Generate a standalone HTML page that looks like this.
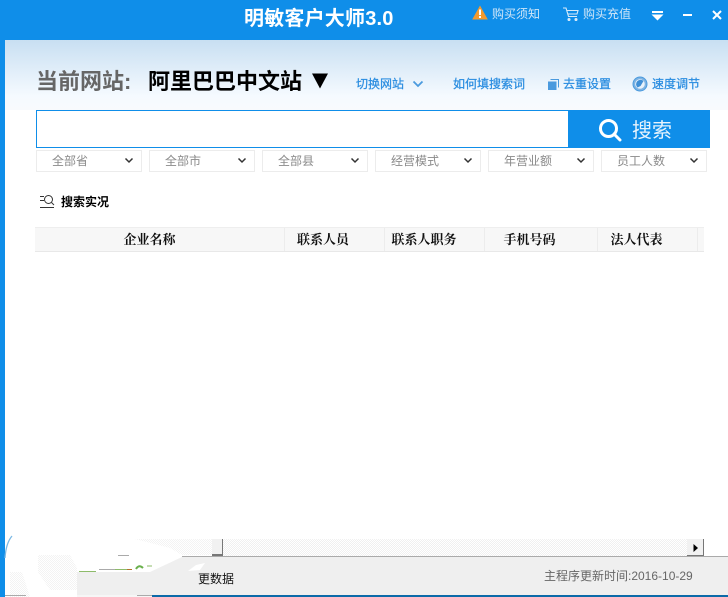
<!DOCTYPE html>
<html lang="zh"><head><meta charset="utf-8"><style>
*{box-sizing:border-box}
html,body{margin:0;padding:0;width:728px;height:597px;overflow:hidden;background:#fff}
body{position:relative;font-family:"Liberation Sans","Noto Sans CJK SC",sans-serif}
.a{position:absolute;white-space:nowrap}
.sel{position:absolute;top:150px;width:106px;height:22px;border:1px solid #ececec;background:#fff;color:#8a8a8a;font-size:12px;line-height:20px;padding-left:15px}
.sel svg{position:absolute;left:86px;top:6px}
.th{position:absolute;top:228px;height:23px;text-align:center;font:bold 13px/23px "Liberation Serif","Noto Serif CJK SC",serif;color:#111;border-right:1px solid #ececec}
.lnk{color:#2a8de0;font-size:12px;line-height:16px;-webkit-text-stroke:.25px #2a8de0}
</style></head><body>
<div class="a" style="left:0;top:40px;width:728px;height:70px;background:linear-gradient(#c8dff2,#f5faff 80%,#f8fafd)"></div>
<div class="a" style="left:0;top:0;width:728px;height:40px;background:#0f8ee9"></div>
<div class="a" style="left:0;top:40px;width:5px;height:557px;background:#0f8ee9"></div>
<div class="a" style="left:244px;top:5px;color:#fff;font-size:20px;font-weight:bold;line-height:28px;letter-spacing:.2px">明敏客户大师3.0</div>

<svg class="a" style="left:472px;top:5px" width="16" height="15" viewBox="0 0 16 15"><path d="M8 0.5L15.8 14.5H0.2Z" fill="#f29a2e"/><rect x="7" y="4.5" width="2" height="5.5" fill="#fff"/><rect x="7" y="11" width="2" height="2" fill="#fff"/></svg>
<div class="a" style="left:492px;top:6px;color:#cfe6f8;font-size:12px;line-height:16px">购买须知</div>
<svg class="a" style="left:563px;top:7px" width="16" height="15" viewBox="0 0 16 15" fill="none" stroke="#d8ebfa" stroke-width="1.1"><path d="M0 1H3L5.5 9.5H14"/><path d="M3.5 3.5H15L14 7H5"/><circle cx="6" cy="12.5" r="1" fill="#d8ebfa"/><circle cx="13" cy="12.5" r="1" fill="#d8ebfa"/></svg>
<div class="a" style="left:583px;top:6px;color:#cfe6f8;font-size:12px;line-height:16px">购买充值</div>
<svg class="a" style="left:651px;top:10px" width="13" height="11" viewBox="0 0 13 11"><rect x="1" y="1" width="11" height="2" fill="#fff"/><path d="M0.5 4.5H12.500L6.500 10.500Z" fill="#fff"/></svg>
<div class="a" style="left:683px;top:14px;width:9px;height:2px;background:#fff"></div>
<svg class="a" style="left:712px;top:10px" width="10" height="10" viewBox="0 0 10 10"><path d="M1 1L9 9M9 1L1 9" stroke="#fff" stroke-width="2"/></svg>

<div class="a" style="left:36px;top:67px;color:#666;font-size:22px;font-weight:bold;line-height:30px">当前网站:</div>
<div class="a" style="left:148px;top:67px;color:#000;font-size:22px;font-weight:bold;line-height:30px">阿里巴巴中文站</div>
<svg class="a" style="left:311px;top:73px" width="18" height="16" viewBox="0 0 18 16"><path d="M1 0.500H17L9 15.500Z" fill="#000"/></svg>

<div class="a lnk" style="left:356px;top:76px">切换网站</div>
<svg class="a" style="left:412px;top:80px" width="12" height="8" viewBox="0 0 12 8"><path d="M1.500 1.500L6 6L10.500 1.500" fill="none" stroke="#4a9ade" stroke-width="1.800"/></svg>
<div class="a lnk" style="left:453px;top:76px">如何填搜索词</div>
<svg class="a" style="left:548px;top:79px" width="11" height="11" viewBox="0 0 11 11"><rect x="0" y="2.500" width="8.500" height="8.500" fill="#4a9ade"/><path d="M2.500 0.500H10.500V8.500" fill="none" stroke="#4a9ade"/></svg>
<div class="a lnk" style="left:563px;top:76px">去重设置</div>
<svg class="a" style="left:632px;top:76px" width="16" height="16" viewBox="0 0 16 16"><circle cx="8" cy="8" r="7" fill="#7fb4e3" stroke="#4a9ade"/><circle cx="8" cy="8" r="4.800" fill="#e8f2fb"/><path d="M5.500 11.500A4 4 0 0 1 11.500 5L8.500 10Z" fill="#3f8fd6"/></svg>
<div class="a lnk" style="left:652px;top:76px">速度调节</div>

<div class="a" style="left:36px;top:110px;width:533px;height:38px;background:#fff;border:1px solid #0f8ee9;border-right:0"></div>
<div class="a" style="left:568px;top:110px;width:142px;height:38px;background:#0f8ee9"></div>
<svg class="a" style="left:598px;top:118px" width="24" height="24" viewBox="0 0 24 24" fill="none" stroke="#fff" stroke-width="3"><circle cx="10.500" cy="10.500" r="8"/><path d="M16 16L22 22" stroke-linecap="round"/></svg>
<div class="a" style="left:632px;top:117px;color:#e6f3fd;font-size:20px;line-height:28px">搜索</div>

<div class="sel" style="left:36px">全部省<svg width="12" height="7" viewBox="0 0 12 7"><path d="M2.500 1.500L6 5L9.500 1.500" fill="none" stroke="#333" stroke-width="1.500"/></svg></div>
<div class="sel" style="left:149px">全部市<svg width="12" height="7" viewBox="0 0 12 7"><path d="M2.500 1.500L6 5L9.500 1.500" fill="none" stroke="#333" stroke-width="1.500"/></svg></div>
<div class="sel" style="left:262px">全部县<svg width="12" height="7" viewBox="0 0 12 7"><path d="M2.500 1.500L6 5L9.500 1.500" fill="none" stroke="#333" stroke-width="1.500"/></svg></div>
<div class="sel" style="left:375px">经营模式<svg width="12" height="7" viewBox="0 0 12 7"><path d="M2.500 1.500L6 5L9.500 1.500" fill="none" stroke="#333" stroke-width="1.500"/></svg></div>
<div class="sel" style="left:488px">年营业额<svg width="12" height="7" viewBox="0 0 12 7"><path d="M2.500 1.500L6 5L9.500 1.500" fill="none" stroke="#333" stroke-width="1.500"/></svg></div>
<div class="sel" style="left:601px">员工人数<svg width="12" height="7" viewBox="0 0 12 7"><path d="M2.500 1.500L6 5L9.500 1.500" fill="none" stroke="#333" stroke-width="1.500"/></svg></div>

<svg class="a" style="left:40px;top:194px" width="15" height="15" viewBox="0 0 15 15" fill="none" stroke="#333" stroke-width="1"><path d="M0 2.500H4M0 6.500H4M0 13.500H14"/><circle cx="8.500" cy="5.500" r="4"/><path d="M11.500 8.500L14 11"/></svg>
<div class="a" style="left:61px;top:194px;color:#000;font-size:12px;font-weight:bold;line-height:16px">搜索实况</div>

<div class="a" style="left:35px;top:227px;width:669px;height:25px;background:#f7f7f7;border-top:1px solid #eee;border-bottom:1px solid #e8e8e8"></div>
<div class="th" style="left:35px;width:250px;padding-right:20px">企业名称</div>
<div class="th" style="left:285px;width:100px;padding-right:23px">联系人员</div>
<div class="th" style="left:385px;width:100px;padding-right:21px">联系人职务</div>
<div class="th" style="left:485px;width:113px;padding-right:23px">手机号码</div>
<div class="th" style="left:598px;width:100px;padding-right:22px">法人代表</div>

<div class="a" style="left:5px;top:539px;width:698px;height:17px;background:repeating-conic-gradient(#f0f0f0 0 25%,#fff 0 50%) 0 0/2px 2px"></div>
<div class="a" style="left:212px;top:539px;width:11px;height:17px;background:#f1f1f1;border-right:1px solid #777;border-bottom:2px solid #777"></div>
<div class="a" style="left:687px;top:539px;width:17px;height:17px;background:#f1f1f1;border-right:1px solid #777;border-bottom:1px solid #777"></div>
<svg class="a" style="left:693px;top:544px" width="6" height="8" viewBox="0 0 6 8"><path d="M0.500 0L5 4L0.500 8Z" fill="#000"/></svg>
<div class="a" style="left:5px;top:556px;width:723px;height:1px;background:#aaa"></div>
<div class="a" style="left:5px;top:557px;width:723px;height:38px;background:#efefef"></div>
<div class="a" style="left:152px;top:595px;width:576px;height:2px;background:#0b6aa8"></div>

<svg class="a" style="left:0;top:525px" width="212" height="72" viewBox="0 525 212 72">
<defs><pattern id="d" width="2" height="2" patternUnits="userSpaceOnUse"><rect width="2" height="2" fill="#fff"/><rect width="1" height="1" fill="#f3f3f3"/><rect x="1" y="1" width="1" height="1" fill="#f3f3f3"/></pattern></defs>
<path d="M5 535H212V556H182V572H77V597H5Z" fill="#fff"/>
<path d="M38 555H70L77 568L77 590L50 590L38 572Z" fill="url(#d)"/>
<path d="M10 572H22L30 597H10Z" fill="url(#d)"/>
<path d="M135 539H212V555H182L170 548Z" fill="url(#d)"/>
<path d="M77 572H150L182 557H212V595H77Z" fill="#efefef"/>
<path d="M77 595H152V597H77Z" fill="#f6f6f6"/>
<path d="M182 556.500H212" stroke="#aaa"/>
<path d="M188 571L196 565L205 563L200 570Z" fill="#fff"/>
<path d="M5 558Q6 543 12 536" fill="none" stroke="#7cb9e4" stroke-width="1.300"/>
<path d="M118 555.500H129" stroke="#aaa"/>
<path d="M79 571.500H96" stroke="#8dbb6a"/><path d="M99 569.500H115" stroke="#aaa"/><path d="M115 569.500H127" stroke="#8dbb6a"/><path d="M127 569.500H132" stroke="#b5712e"/>
<path d="M136 569Q139 564 143 568" fill="none" stroke="#6ab04c" stroke-width="2"/><path d="M147 566H152" stroke="#8dbb6a"/>
<path d="M5 595.500H26M137 595.500H152" stroke="#aaa"/>
</svg>
<div class="a" style="left:194px;top:571px;color:#111;font-size:12px;line-height:16px;width:40px;overflow:hidden;direction:rtl">更数据</div>
<div class="a" style="left:544px;top:568px;color:#666;font-size:12px;line-height:16px">主程序更新时间:2016-10-29</div>
</body></html>
